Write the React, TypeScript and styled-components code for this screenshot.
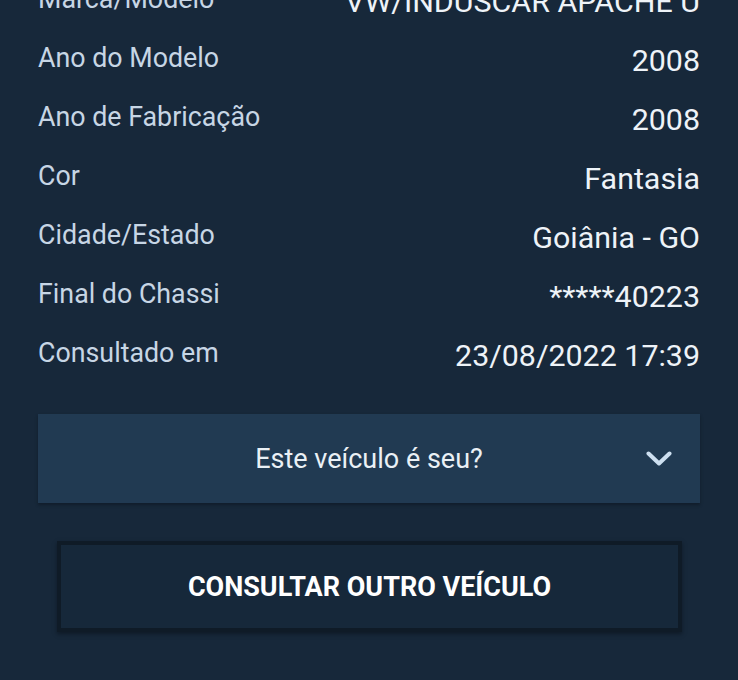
import React from 'react'
import styled, { createGlobalStyle } from 'styled-components'

const GlobalStyle = createGlobalStyle`
  html, body {
    margin: 0;
    padding: 0;
    background: #17283a;
  }
  body {
    font-family: Roboto, "Liberation Sans", sans-serif;
    overflow: hidden;
  }
`

const Page = styled.div`
  width: 738px;
  height: 680px;
  background: #17283a;
  padding: 0 38px;
  box-sizing: border-box;
  overflow: hidden;
`

// the list is scrolled, so the first row sits half above the top edge
const InfoList = styled.div`
  display: flex;
  flex-direction: column;
  margin-top: -30px;
`

const InfoRow = styled.div`
  height: 59px;
  display: flex;
  align-items: center;
  justify-content: space-between;
`

const Label = styled.span`
  font-size: 26.8px;
  color: #c7d6e5;
  margin-top: -1px;
`

const Value = styled.span`
  font-size: 30.4px;
  color: #eef3f8;
  padding-top: 4px;
`

const OwnerPanel = styled.div`
  margin-top: 31px;
  height: 89px;
  background: #213a52;
  box-shadow: 0 2px 3px rgba(8, 16, 24, 0.45);
  display: flex;
  align-items: center;
  justify-content: center;
  position: relative;
`

const OwnerText = styled.span`
  font-size: 27px;
  color: #eaf0f5;
`

const Chevron = styled.svg`
  position: absolute;
  right: 28px;
  top: 50%;
  margin-top: -8px;
`

const OtherButton = styled.button`
  display: block;
  margin: 38px 18px 0 19px;
  width: calc(100% - 37px);
  height: 91px;
  background: #16283a;
  border: 4px solid #0f1b27;
  box-shadow: 0 2px 4px rgba(6, 12, 20, 0.5);
  color: #ffffff;
  font-family: Roboto, "Liberation Sans", sans-serif;
  font-size: 27px;
  font-weight: 700;
  cursor: pointer;
`

const rows: [string, string][] = [
  ['Marca/Modelo', 'VW/INDUSCAR APACHE U'],
  ['Ano do Modelo', '2008'],
  ['Ano de Fabricação', '2008'],
  ['Cor', 'Fantasia'],
  ['Cidade/Estado', 'Goiânia - GO'],
  ['Final do Chassi', '*****40223'],
  ['Consultado em', '23/08/2022 17:39'],
]

export default function App() {
  return (
    <Page>
      <GlobalStyle />
      <InfoList>
        {rows.map(([label, value]) => (
          <InfoRow key={label}>
            <Label>{label}</Label>
            <Value>{value}</Value>
          </InfoRow>
        ))}
      </InfoList>
      <OwnerPanel>
        <OwnerText>Este veículo é seu?</OwnerText>
        <Chevron width="26" height="16" viewBox="0 0 26 16">
          <path d="M2.5 2.5 L13 12.5 L23.5 2.5" fill="none" stroke="#cddff0" strokeWidth="4" strokeLinecap="round" strokeLinejoin="round" />
        </Chevron>
      </OwnerPanel>
      <OtherButton>CONSULTAR OUTRO VEÍCULO</OtherButton>
    </Page>
  )
}
